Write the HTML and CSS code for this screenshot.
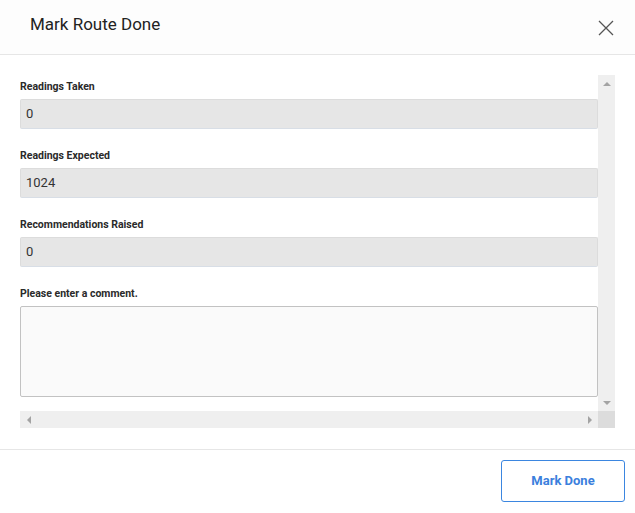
FILE: index.html
```html
<html>
<head>
<link rel="stylesheet" href="styles.css">
</head>
<body>
<div class="dialog">
	<div class="dialog_header">
		<span class="dialog_title">Mark Route Done</span>
		<svg class="close_btn" width="16" height="16" viewBox="0 0 16 16">
			<path d="M1 1 L15 15 M15 1 L1 15" stroke="#555" stroke-width="1.3" fill="none" />
		</svg>
	</div>

	<div class="dialog_body">
		<div class="scroll_box">
			<div class="scroll_content">
				<div class="field">
					<div class="field_label">Readings Taken</div>
					<div class="field_value">0</div>
				</div>
				<div class="field">
					<div class="field_label">Readings Expected</div>
					<div class="field_value">1024</div>
				</div>
				<div class="field">
					<div class="field_label">Recommendations Raised</div>
					<div class="field_value">0</div>
				</div>
				<div class="field">
					<div class="field_label">Please enter a comment.</div>
					<div class="field_comment"></div>
				</div>
			</div>
			<div class="vscroll">
				<span class="arrow_up"></span>
				<span class="arrow_down"></span>
			</div>
			<div class="hscroll">
				<span class="arrow_left"></span>
				<span class="arrow_right"></span>
			</div>
			<div class="scroll_corner"></div>
		</div>
	</div>

	<div class="dialog_footer">
		<div class="mark_btn">Mark Done</div>
	</div>
</div>
</body>
</html>
```

FILE: styles.css
```css
body {
	margin: 0;
	background-color: #ffffff;
	font-family: Roboto, "Noto Sans", sans-serif;
	color: #333333;
}
.dialog {
	width: 635px;
	height: 513px;
	display: flex;
	flex-direction: column;
}
.dialog_header {
	height: 54px;
	border-bottom: 1px solid #e6e6e6;
	background-color: #fdfdfd;
	display: flex;
	align-items: center;
	justify-content: space-between;
	padding: 0 21px 0 30px;
}
.dialog_title {
	font-size: 17px;
	color: #222222;
	margin-top: -7px;
}
.close_btn {
	margin-top: 1px;
}
.dialog_body {
	padding: 20px 20px 21px 20px;
}
.scroll_box {
	height: 353px;
	display: grid;
	grid-template-columns: 1fr 17px;
	grid-template-rows: 1fr 17px;
}
.scroll_content {
	padding-top: 3px;
	overflow: hidden;
}
.field {
	margin-bottom: 18px;
}
.field_label {
	font-size: 10.5px;
	font-weight: bold;
	line-height: 17px;
	color: #2a2a2a;
	margin-bottom: 4px;
}
.field_value {
	height: 28px;
	line-height: 28px;
	background-color: #e6e6e6;
	border: 1px solid #dcdcdc;
	border-bottom-color: #d8dee6;
	border-radius: 2px;
	padding-left: 5px;
	font-size: 13px;
	color: #333333;
}
.field_comment {
	height: 89px;
	background-color: #fafafa;
	border: 1px solid #c2c2c2;
	border-radius: 2px;
}
.vscroll {
	background-color: #efefef;
	display: flex;
	flex-direction: column;
	justify-content: space-between;
	align-items: center;
	padding: 7px 0 6px 0;
}
.hscroll {
	background-color: #efefef;
	display: flex;
	justify-content: space-between;
	align-items: center;
	padding: 0 6px 0 7px;
}
.scroll_corner {
	background-color: #dcdcdc;
}
.arrow_up {
	border-left: 4px solid transparent;
	border-right: 4px solid transparent;
	border-bottom: 4px solid #a3a3a3;
}
.arrow_down {
	border-left: 4px solid transparent;
	border-right: 4px solid transparent;
	border-top: 4px solid #a3a3a3;
}
.arrow_left {
	border-top: 4px solid transparent;
	border-bottom: 4px solid transparent;
	border-right: 4px solid #a3a3a3;
}
.arrow_right {
	border-top: 4px solid transparent;
	border-bottom: 4px solid transparent;
	border-left: 4px solid #a3a3a3;
}
.dialog_footer {
	border-top: 1px solid #e6e6e6;
	display: flex;
	justify-content: flex-end;
	padding: 10px 10px 0 0;
}
.mark_btn {
	width: 122px;
	height: 40px;
	line-height: 40px;
	text-align: center;
	border: 1px solid #3b86e0;
	border-radius: 3px;
	color: #3b80dd;
	font-size: 13px;
	font-weight: bold;
}
```
